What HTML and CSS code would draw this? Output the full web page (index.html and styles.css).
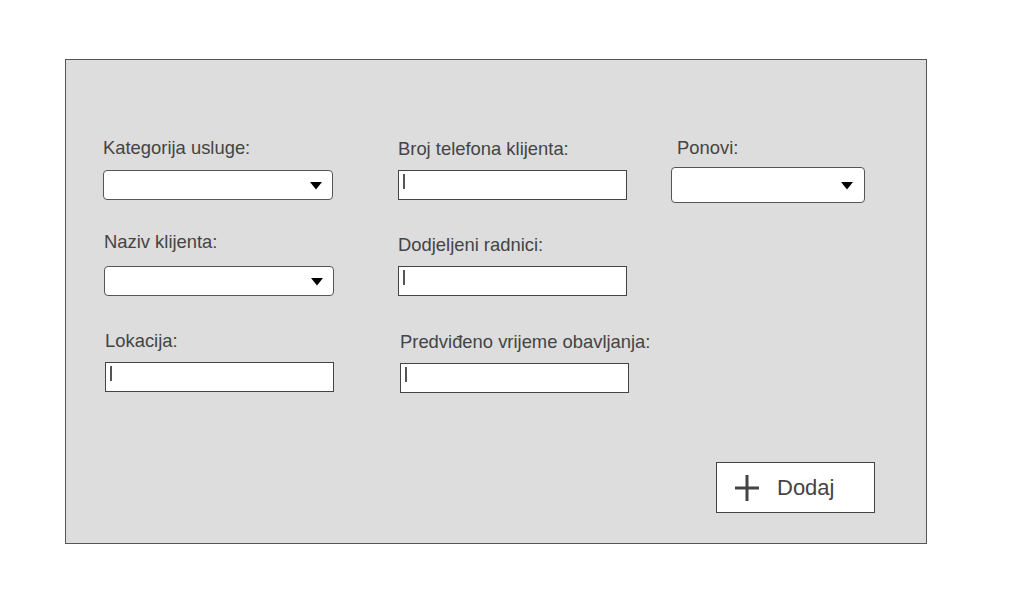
FILE: index.html
```html
<!DOCTYPE html>
<html lang="hr">
<head>
<meta charset="utf-8">
<title>Dodaj uslugu</title>
<link rel="stylesheet" href="styles.css">
</head>
<body>
<div class="page">
  <div class="panel">
    <div class="form-grid">
      <div class="field">
        <span class="label">Kategorija usluge:</span>
        <div class="select"><svg class="arrow" width="12" height="8" viewBox="0 0 12 8"><path d="M0 0H12L6 7.5Z" fill="#000"/></svg></div>
      </div>
      <div class="field">
        <span class="label label-low">Broj telefona klijenta:</span>
        <div class="input"><span class="caret"></span></div>
      </div>
      <div class="field field-ponovi">
        <span class="label label-ponovi">Ponovi:</span>
        <div class="select select-ponovi"><svg class="arrow" width="12" height="8" viewBox="0 0 12 8"><path d="M0 0H12L6 7.5Z" fill="#000"/></svg></div>
      </div>

      <div class="field shift-1">
        <span class="label label-high">Naziv klijenta:</span>
        <div class="select"><svg class="arrow" width="12" height="8" viewBox="0 0 12 8"><path d="M0 0H12L6 7.5Z" fill="#000"/></svg></div>
      </div>
      <div class="field">
        <span class="label label-low">Dodjeljeni radnici:</span>
        <div class="input"><span class="caret"></span></div>
      </div>
      <div class="field empty"></div>

      <div class="field shift-2">
        <span class="label label-low">Lokacija:</span>
        <div class="input"><span class="caret"></span></div>
      </div>
      <div class="field shift-2 down-1">
        <span class="label label-low">Predviđeno vrijeme obavljanja:</span>
        <div class="input"><span class="caret"></span></div>
      </div>
    </div>
    <div class="actions">
      <button class="btn-add" type="button">
        <svg class="plus" width="24" height="26" viewBox="0 0 24 26"><path d="M12 0V26M0 13H24" stroke="#444" stroke-width="3" fill="none"/></svg>
        <span>Dodaj</span>
      </button>
    </div>
  </div>
</div>
</body>
</html>
```

FILE: styles.css
```css
* { box-sizing: border-box; }

html, body {
  margin: 0;
  padding: 0;
  background: #ffffff;
  font-family: "Liberation Sans", Arial, sans-serif;
  color: #444444;
}

.page {
  padding: 59px 0 0 65px;
}

.panel {
  width: 862px;
  height: 485px;
  background: #dddddd;
  border: 1px solid #555555;
  padding: 77px 51px 0 37px;
  display: flex;
  flex-direction: column;
}

.form-grid {
  display: grid;
  grid-template-columns: 295px 273px 1fr;
  row-gap: 33px;
  align-items: start;
}

.field {
  display: flex;
  flex-direction: column;
  align-items: flex-start;
}

.field-ponovi {
  margin-bottom: -3px;
}

.label {
  display: block;
  font-size: 18.4px;
  line-height: 20px;
  color: #444444;
  margin-top: 1px;
  margin-bottom: 12px;
  white-space: nowrap;
}

.label-low { margin-top: 2px; margin-bottom: 11px; }
.label-high { margin-top: -1px; margin-bottom: 14px; }

.label-ponovi {
  margin-left: 6px;
  margin-bottom: 9px;
}

.select {
  width: 230px;
  height: 30px;
  background: #ffffff;
  border: 1px solid #555555;
  border-radius: 4px;
  display: flex;
  align-items: center;
  justify-content: flex-end;
  padding: 1px 10px 0 0;
}

.select-ponovi {
  width: 194px;
  height: 36px;
  padding-right: 11px;
}

.arrow { display: block; }

.input {
  width: 229px;
  height: 30px;
  background: #ffffff;
  border: 1px solid #444444;
  padding: 3px 0 0 4px;
}

.caret {
  display: block;
  width: 2px;
  height: 15px;
  background: #555555;
}

.shift-1 { margin-left: 1px; }
.shift-2 { margin-left: 2px; }
.down-1 { margin-top: 1px; }

.actions {
  display: flex;
  justify-content: flex-end;
  margin-top: 69px;
}

.btn-add {
  width: 159px;
  height: 51px;
  background: #ffffff;
  border: 1px solid #444444;
  border-radius: 0;
  padding: 0 0 0 18px;
  display: flex;
  align-items: center;
  gap: 18px;
  font-family: "Liberation Sans", Arial, sans-serif;
  font-size: 22px;
  line-height: 24px;
  color: #444444;
  cursor: pointer;
}

.plus { display: block; }
```
